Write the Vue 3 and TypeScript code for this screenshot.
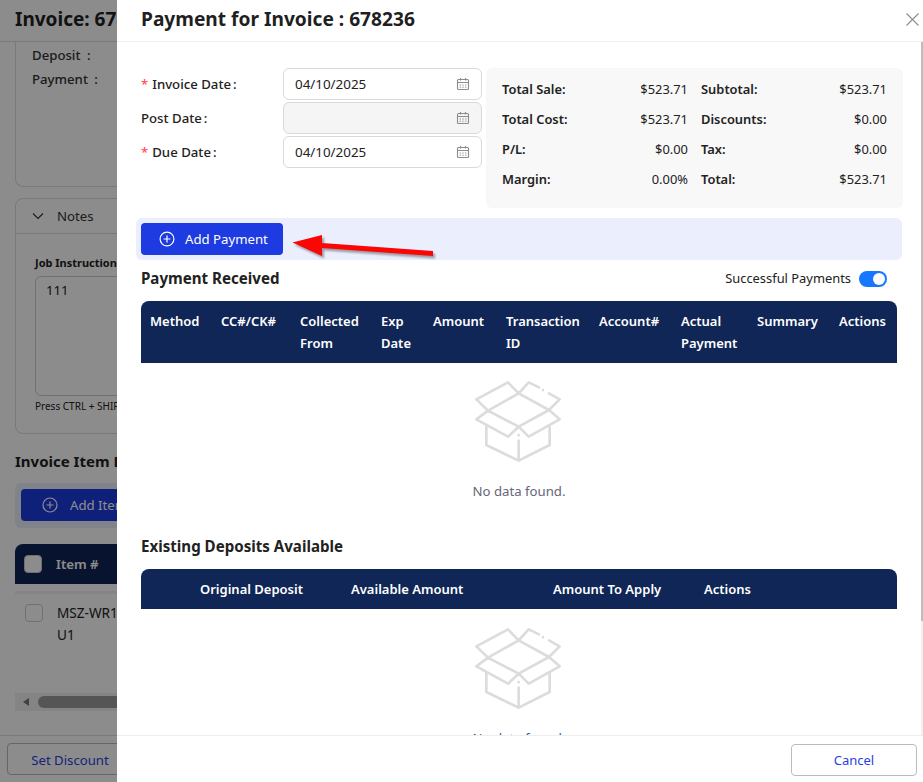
<script setup lang="ts">
const paymentCols: string[][] = [
  ['Method'], ['CC#/CK#'], ['Collected', 'From'], ['Exp', 'Date'], ['Amount'],
  ['Transaction', 'ID'], ['Account#'], ['Actual', 'Payment'], ['Summary'], ['Actions'],
]
const depositCols: string[] = ['Original Deposit', 'Available Amount', 'Amount To Apply', 'Actions']
const summary: [string, string][] = [
  ['Total Sale:', '$523.71'], ['Subtotal:', '$523.71'],
  ['Total Cost:', '$523.71'], ['Discounts:', '$0.00'],
  ['P/L:', '$0.00'], ['Tax:', '$0.00'],
  ['Margin:', '0.00%'], ['Total:', '$523.71'],
]
const dates = [
  { label: 'Invoice Date', required: true, value: '04/10/2025', disabled: false },
  { label: 'Post Date', required: false, value: '', disabled: true },
  { label: 'Due Date', required: true, value: '04/10/2025', disabled: false },
]
</script>

<template>
  <div class="screen">
    <!-- page behind the drawer -->
    <div class="page">
      <div class="page-head">Invoice: 678236</div>
      <div class="page-scroll">
        <section class="pay-card">
          <div class="pay-line">Deposit <span>:</span></div>
          <div class="pay-line">Payment <span>:</span></div>
        </section>
        <section class="notes-card">
          <div class="notes-head">
            <svg class="chev" viewBox="0 0 12 12" width="12" height="12"><path d="M1 3.5 6 8.5 11 3.5" fill="none" stroke="currentColor" stroke-width="1.1" /></svg>
            Notes
          </div>
          <div class="notes-body">
            <div class="job">Job Instructions</div>
            <div class="textarea">111</div>
            <div class="hint">Press CTRL + SHIFT + ENTER</div>
          </div>
        </section>
        <h3 class="items-title">Invoice Item Details</h3>
        <div class="items-bar">
          <div class="items-btn">
            <svg viewBox="0 0 16 16" width="16" height="16"><circle cx="8" cy="8" r="7" fill="none" stroke="currentColor" stroke-width="1.2" /><path d="M8 4.5v7M4.5 8h7" stroke="currentColor" stroke-width="1.2" /></svg>
            Add Item
          </div>
        </div>
        <div class="items-head"><i class="check solid"></i><span>Item #</span></div>
        <div class="items-band"></div>
        <div class="items-row"><i class="check"></i><span>MSZ-WR18NA<br />U1</span></div>
        <div class="hscroll"><b></b><em></em></div>
      </div>
      <div class="page-foot"><div class="discount">Set Discount</div></div>
    </div>
    <div class="mask"></div>

    <!-- payment drawer -->
    <aside class="drawer">
      <header class="d-head">
        <h2>Payment for Invoice : 678236</h2>
        <svg class="close" viewBox="0 0 13 13" width="13" height="13"><path d="M.5.5l12 12M12.5.5l-12 12" stroke="currentColor" stroke-width="1.1" fill="none" /></svg>
      </header>

      <div class="d-body">
        <div class="top">
          <div class="form">
            <div v-for="d in dates" :key="d.label" class="field">
              <label><em v-if="d.required">*</em>{{ d.label }}<span>:</span></label>
              <div class="input" :class="{ off: d.disabled }">
                <span>{{ d.value }}</span>
                <svg viewBox="0 0 14 14" width="14" height="14" fill="none" stroke="#8c8c8c" stroke-width="1.1">
                  <rect x="1.5" y="2.5" width="11" height="10" rx="1" />
                  <path d="M1.5 5.5h11M4.5 1v2.5M9.5 1v2.5" />
                  <path d="M3.6 8h1.4M6.3 8h1.4M9 8h1.4M3.6 10.2h1.4M6.3 10.2h1.4M9 10.2h1.4" stroke-width=".9" />
                </svg>
              </div>
            </div>
          </div>
          <div class="summary">
            <div v-for="s in summary" :key="s[0]" class="sum-item">
              <strong>{{ s[0] }}</strong><span>{{ s[1] }}</span>
            </div>
          </div>
        </div>

        <div class="action-bar">
          <button class="add" type="button">
            <svg viewBox="0 0 16 16" width="16" height="16"><circle cx="8" cy="8" r="6.9" fill="none" stroke="#fff" stroke-width="1.2" /><path d="M8 4.6v6.8M4.6 8h6.8" stroke="#fff" stroke-width="1.2" /></svg>
            Add Payment
          </button>
        </div>

        <div class="title-row">
          <h3>Payment Received</h3>
          <div class="switch-wrap">
            <span>Successful Payments</span>
            <i class="switch"><b></b></i>
          </div>
        </div>

        <div class="thead pay">
          <div v-for="c in paymentCols" :key="c[0]" class="th">
            <div v-for="l in c" :key="l">{{ l }}</div>
          </div>
        </div>
        <div class="empty">
          <svg viewBox="0 0 270 250" width="90" height="83.33" fill="none" stroke="#dcdcdc" stroke-width="8" stroke-linejoin="round" stroke-linecap="round">
            <path d="M137 40 45 92 137 140 228 90 137 40ZM137 40 105 7 10 58 45 92 10 118 105 170 137 140 167 170 260 118 228 90 260 58 228 40M137 40 167 7 198 22" />
            <path d="M40 140V195L137 242 230 195V140M137 242V182" />
            <path d="M137 165v.5M210 30v.5" />
          </svg>
          <p>No data found.</p>
        </div>

        <h3 class="dep-title">Existing Deposits Available</h3>
        <div class="thead dep">
          <div v-for="c in depositCols" :key="c" class="th">{{ c }}</div>
        </div>
        <div class="empty second">
          <svg viewBox="0 0 270 250" width="90" height="83.33" fill="none" stroke="#dcdcdc" stroke-width="8" stroke-linejoin="round" stroke-linecap="round">
            <path d="M137 40 45 92 137 140 228 90 137 40ZM137 40 105 7 10 58 45 92 10 118 105 170 137 140 167 170 260 118 228 90 260 58 228 40M137 40 167 7 198 22" />
            <path d="M40 140V195L137 242 230 195V140M137 242V182" />
            <path d="M137 165v.5M210 30v.5" />
          </svg>
          <p class="blue">No data found.</p>
        </div>
      </div>

      <footer class="d-foot">
        <button class="cancel" type="button">Cancel</button>
      </footer>
      <div class="vbar"><b></b></div>
    </aside>

    <!-- annotation arrow drawn over the screenshot -->
    <svg class="arrow" viewBox="0 0 150 30" width="150" height="30">
      <defs>
        <filter id="arrow-shadow" x="-10%" y="-40%" width="120%" height="180%"><feGaussianBlur stdDeviation="0.8" /></filter>
      </defs>
      <path d="M1.5 10.5 31 3 31 11 142 19 142 24 31 16 31 24Z" fill="#000" opacity=".35" transform="translate(2 2.5)" filter="url(#arrow-shadow)" />
      <path d="M1.5 10.5 31 3 31 11 142 19 142 24 31 16 31 24Z" fill="#fb0505" />
    </svg>
  </div>
</template>

<style>
html, body { margin: 0; background: #fff; }
</style>

<style scoped>
.screen {
  position: relative;
  width: 923px;
  height: 782px;
  overflow: hidden;
  font-family: "Noto Sans", "Liberation Sans", sans-serif;
  font-size: 13.2px;
  color: #222;
}
.page { width: 100%; height: 100%; display: flex; flex-direction: column; background: #fff; }
.page-head { height: 41px; line-height: 38px; padding-left: 15px; font-size: 19px; font-weight: 700; border-bottom: 1px solid #ddd; white-space: nowrap; }
.page-scroll { flex: 1; overflow: hidden; padding: 0 15px; }
.pay-card { height: 145px; box-sizing: border-box; border: 1px solid #ddd; border-top: 0; border-radius: 0 0 8px 8px; padding: 1px 16px; }
.pay-line { height: 24px; line-height: 24px; font-weight: 500; color: #333; }
.pay-line span { margin-left: 3px; }
.notes-card { margin-top: 11px; height: 236px; box-sizing: border-box; border: 1px solid #ddd; border-radius: 8px; width: 300px; }
.notes-head { height: 34px; display: flex; align-items: center; gap: 13px; padding-left: 16px; border-bottom: 1px solid #ddd; color: #333; }
.notes-body { padding: 21px 19px; }
.job { font-size: 11px; font-weight: 700; line-height: 16px; white-space: nowrap; }
.textarea { margin-top: 5px; height: 120px; box-sizing: border-box; padding: 4px 10px; border: 1px solid #ccc; border-radius: 6px; }
.hint { font-size: 10px; margin-top: 3px; line-height: 14px; white-space: nowrap; }
.items-title { margin: 17px 0 0; font-size: 15px; line-height: 20px; white-space: nowrap; }
.items-bar { margin-top: 12px; height: 45px; width: 300px; box-sizing: border-box; padding: 6px; background: #ebeffd; border-radius: 6px; }
.items-btn { display: flex; align-items: center; gap: 12px; height: 32px; padding-left: 21px; background: #1d3be0; color: #fff; border-radius: 4px; }
.items-head { margin-top: 16px; height: 40px; width: 300px; display: flex; align-items: center; gap: 14px; padding-left: 9px; box-sizing: border-box; background: #0f2656; color: #fff; border-radius: 8px 8px 0 0; font-weight: 600; }
.items-band { margin-top: 7px; height: 3px; width: 300px; background: #f0f0f0; }
.items-row { display: flex; gap: 14px; padding: 8px 10px; width: 300px; box-sizing: border-box; line-height: 22px; height: 99px; font-size: 13.6px; }
.check { width: 16px; height: 16px; flex: none; border: 1px solid #ccc; border-radius: 4px; background: #fff; margin-top: 2px; }
.check.solid { margin: 0; }
.hscroll { position: relative; height: 18px; width: 300px; background: #f1f1f1; }
.hscroll b { position: absolute; left: 23px; top: 3px; width: 277px; height: 12px; border-radius: 6px; background: #9c9c9c; }
.hscroll em { position: absolute; left: 8px; top: 5px; border: 4px solid transparent; border-right: 6px solid #777; border-left: 0; }
.page-foot { height: 47px; box-sizing: border-box; border-top: 1px solid #ddd; padding: 7px; }
.discount { width: 126px; height: 32px; line-height: 32px; box-sizing: border-box; border: 1px solid #bbb; border-radius: 4px; text-align: center; color: #2b3fe0; }
.mask { position: absolute; inset: 0; background: rgba(0, 0, 0, .45); }

.drawer { position: absolute; left: 117px; top: 0; right: 0; bottom: 0; display: flex; flex-direction: column; background: #fff; }
.d-head { flex: none; height: 37px; display: flex; align-items: center; justify-content: space-between; padding: 0 4px 4px 24px; border-bottom: 1px solid #eee; }
.d-head h2 { margin: 0; font-size: 19.15px; font-weight: 700; color: #1f1f1f; white-space: nowrap; }
.close { color: #8c8c8c; margin-top: 1px; }
.d-body { flex: 1; min-height: 0; overflow: hidden; padding: 26px 26px 0 24px; }
.top { display: flex; gap: 4px; width: 762px; }
.form { width: 341px; display: flex; flex-direction: column; gap: 2px; }
.field { display: flex; align-items: center; height: 32px; }
.field label { width: 142px; font-weight: 500; white-space: nowrap; }
.field label em { color: #ff4d4f; font-style: normal; margin-right: 4px; }
.field label span { margin-left: 2px; }
.input { flex: 1; height: 32px; box-sizing: border-box; display: flex; align-items: center; justify-content: space-between; padding: 0 11px; border: 1px solid #d9d9d9; border-radius: 6px; background: #fff; font-size: 13.4px; }
.input.off { background: #f5f5f5; }
.summary { width: 417px; height: 140px; box-sizing: border-box; padding: 6px 16px; background: #f8f8f8; border-radius: 6px; display: grid; grid-template-columns: 186px 186px; column-gap: 13px; grid-auto-rows: 30px; font-size: 12.9px; }
.sum-item { display: flex; align-items: center; justify-content: space-between; white-space: nowrap; }
.sum-item strong { font-weight: 600; }
.action-bar { margin: 10px 0 0 -5px; width: 766px; height: 42px; box-sizing: border-box; padding: 5px; background: #ebeffd; border-radius: 6px; }
.add { width: 142px; height: 32px; display: flex; align-items: center; gap: 10px; padding: 0 0 0 18px; border: 0; border-radius: 4px; background: #1d3be0; color: #fff; font: inherit; }
.title-row { display: flex; justify-content: space-between; align-items: center; height: 41px; width: 746px; }
.title-row h3, .dep-title { margin: 0; font-size: 15.1px; font-weight: 700; color: #222; white-space: nowrap; }
.title-row h3 { margin-bottom: 6px; }
.switch-wrap { display: flex; align-items: center; gap: 8px; margin-top: -3px; font-size: 12.9px; }
.switch-wrap span { margin-top: -3px; }
.switch { width: 28px; height: 16px; border-radius: 8px; background: #1677ff; position: relative; display: block; }
.switch b { position: absolute; right: 2px; top: 2px; width: 12px; height: 12px; border-radius: 50%; background: #fff; }
.thead { width: 756px; background: #0f2656; color: #fff; border-radius: 8px 8px 0 0; font-weight: 600; display: grid; font-size: 13px; }
.thead.pay { height: 62px; padding-top: 9px; box-sizing: border-box; line-height: 22px; grid-template-columns: 71px 79px 81px 52px 73px 93px 82px 76px 82px 67px; }
.thead.pay .th { padding-left: 9px; white-space: nowrap; }
.thead.dep { height: 40px; align-items: center; grid-template-columns: 151px 202px 151px 193px; padding-left: 59px; box-sizing: border-box; }
.thead.dep .th { white-space: nowrap; }
.empty { width: 756px; padding-top: 17px; height: 139px; box-sizing: content-box; display: flex; flex-direction: column; align-items: center; }
.empty p { margin: 18px 0 0; color: #667; line-height: 20px; }
.empty p.blue { color: #2f5aa8; }
.empty.second { padding-top: 18px; }
.empty svg { margin-left: -2px; }
.dep-title { line-height: 20px; margin-top: 17px; margin-bottom: 13px; }
.d-foot { flex: none; height: 47px; box-sizing: border-box; border-top: 1px solid #eee; display: flex; justify-content: flex-end; padding: 8px 6px 0 0; background: #fff; }
.cancel { width: 126px; height: 32px; border: 1px solid #bbb; border-radius: 4px; background: #fff; color: #2b3fe0; font: inherit; font-size: 13px; }
.vbar { position: absolute; right: 0; top: 42px; bottom: 47px; width: 2px; background: #f1f1f1; }
.vbar b { display: block; height: 579px; background: #bdbdbd; }
.arrow { position: absolute; left: 291px; top: 232px; }
</style>
